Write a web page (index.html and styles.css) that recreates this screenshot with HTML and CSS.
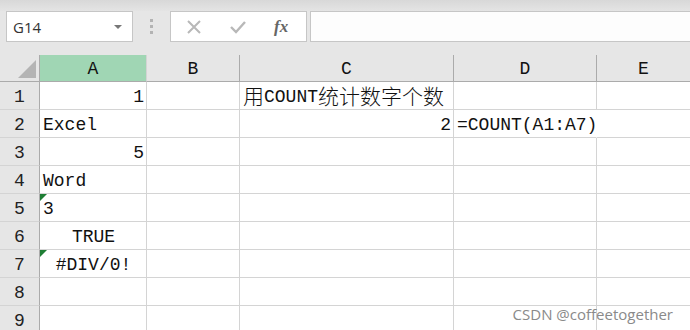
FILE: index.html
```html
<!DOCTYPE html>
<html lang="zh">
<head>
    <meta charset="UTF-8">
    <title>COUNT</title>
    <link rel="stylesheet" href="styles.css">
</head>
<body>
    <div class="top-strip"></div>

    <div class="formula-bar">
        <div class="name-box">
            <span class="name-text">G14</span>
            <span class="name-arrow"></span>
        </div>
        <div class="grip">
            <span></span><span></span><span></span>
        </div>
        <div class="fx-box">
            <svg class="fx-icon" width="16" height="16" viewBox="0 0 16 16">
                <path d="M2 2 L14 14 M14 2 L2 14" stroke="#b8b8b8" stroke-width="2" fill="none"/>
            </svg>
            <svg class="fx-icon" width="18" height="16" viewBox="0 0 18 16">
                <path d="M2 8 L7 13 L16 3" stroke="#b8b8b8" stroke-width="2.4" fill="none"/>
            </svg>
            <span class="fx-label">fx</span>
        </div>
        <div class="formula-input"></div>
    </div>

    <div class="sheet">
        <div class="corner"><span class="corner-tri"></span></div>
        <div class="col-head selected">A</div>
        <div class="col-head">B</div>
        <div class="col-head">C</div>
        <div class="col-head">D</div>
        <div class="col-head">E</div>

        <div class="row-head">1</div>
        <div class="cell right">1</div>
        <div class="cell"></div>
        <div class="cell"><span class="han">用</span>COUNT<span class="han">统计数字个数</span></div>
        <div class="cell"></div>
        <div class="cell"></div>

        <div class="row-head">2</div>
        <div class="cell">Excel</div>
        <div class="cell"></div>
        <div class="cell right">2</div>
        <div class="cell spill">=COUNT(A1:A7)</div>
        <div class="cell"></div>

        <div class="row-head">3</div>
        <div class="cell right">5</div>
        <div class="cell"></div>
        <div class="cell"></div>
        <div class="cell"></div>
        <div class="cell"></div>

        <div class="row-head">4</div>
        <div class="cell">Word</div>
        <div class="cell"></div>
        <div class="cell"></div>
        <div class="cell"></div>
        <div class="cell"></div>

        <div class="row-head">5</div>
        <div class="cell flag">3</div>
        <div class="cell"></div>
        <div class="cell"></div>
        <div class="cell"></div>
        <div class="cell"></div>

        <div class="row-head">6</div>
        <div class="cell center">TRUE</div>
        <div class="cell"></div>
        <div class="cell"></div>
        <div class="cell"></div>
        <div class="cell"></div>

        <div class="row-head">7</div>
        <div class="cell center flag">#DIV/0!</div>
        <div class="cell"></div>
        <div class="cell"></div>
        <div class="cell"></div>
        <div class="cell"></div>

        <div class="row-head">8</div>
        <div class="cell"></div>
        <div class="cell"></div>
        <div class="cell"></div>
        <div class="cell"></div>
        <div class="cell"></div>

        <div class="row-head">9</div>
        <div class="cell"></div>
        <div class="cell"></div>
        <div class="cell"></div>
        <div class="cell"></div>
        <div class="cell"></div>

        <div class="watermark">CSDN @coffeetogether</div>
    </div>
</body>
</html>
```

FILE: styles.css
```css
:root {
    --toolbar-bg: #e6e6e6;
    --grid-line: #d4d4d4;
    --head-line: #ababab;
    --selected: #a0d6b4;
    --cell-font: 'Liberation Mono', 'DejaVu Sans Mono', monospace;
}

body {
    margin: 0;
    padding: 0;
    width: 690px;
    height: 330px;
    overflow: hidden;
    background-color: var(--toolbar-bg);
    color: #111;
}

.top-strip {
    height: 11px;
    background: linear-gradient(#d8d8d8, #e4e4e4);
}

.formula-bar {
    height: 31px;
    display: flex;
    align-items: stretch;
    padding-left: 6px;
}

.name-box {
    width: 127px;
    box-sizing: border-box;
    background-color: #fff;
    border: 1px solid #c6c6c6;
    display: flex;
    align-items: center;
    justify-content: space-between;
    padding: 0 10px 0 6px;
}

.name-text {
    font-family: 'Open Sans', 'Noto Sans', sans-serif;
    font-size: 15px;
    color: #333;
}

.name-arrow {
    width: 0;
    height: 0;
    border-left: 4px solid transparent;
    border-right: 4px solid transparent;
    border-top: 4px solid #777;
}

.grip {
    width: 37px;
    display: flex;
    flex-direction: column;
    align-items: center;
    justify-content: center;
    gap: 3px;
}

.grip span {
    width: 3px;
    height: 3px;
    background-color: #b3b3b3;
}

.fx-box {
    width: 137px;
    box-sizing: border-box;
    background-color: #fff;
    border: 1px solid #c6c6c6;
    display: flex;
    align-items: center;
    padding-left: 15px;
    gap: 27px;
}

.fx-label {
    font-family: 'Liberation Serif', serif;
    font-style: italic;
    font-weight: bold;
    font-size: 17px;
    color: #666;
}

.formula-input {
    flex: 1;
    margin-left: 3px;
    margin-right: -2px;
    background-color: #fdfdfd;
    border: 1px solid #c6c6c6;
}

.sheet {
    position: relative;
    margin-top: 13px;
    display: grid;
    grid-template-columns: 40px 107px 93px 214px 143px 94px;
    grid-template-rows: 27px repeat(9, 28px);
    font-family: var(--cell-font);
    font-size: 18px;
}

.corner {
    position: relative;
    border-right: 1px solid var(--head-line);
    border-bottom: 1px solid var(--head-line);
}

.corner-tri {
    position: absolute;
    right: 3px;
    bottom: 3px;
    width: 0;
    height: 0;
    border-left: 18px solid transparent;
    border-bottom: 18px solid #b4b4b4;
}

.col-head {
    display: flex;
    align-items: center;
    justify-content: center;
    border-right: 1px solid var(--head-line);
    border-bottom: 1px solid var(--head-line);
    padding-top: 1px;
}

.col-head.selected {
    background-color: var(--selected);
    border-right-color: var(--grid-line);
}

.row-head {
    display: flex;
    align-items: flex-end;
    justify-content: center;
    padding-bottom: 2px;
    border-right: 1px solid var(--head-line);
    border-bottom: 1px solid var(--grid-line);
    color: #222;
}

.cell {
    position: relative;
    background-color: #fff;
    border-right: 1px solid var(--grid-line);
    border-bottom: 1px solid var(--grid-line);
    display: flex;
    align-items: flex-end;
    padding: 0 2px 2px 3px;
    white-space: nowrap;
    overflow: visible;
}

.right {
    justify-content: flex-end;
}

.center {
    justify-content: center;
}

.spill {
    border-right-color: #fff;
    z-index: 1;
}

.han {
    font-family: 'Noto Sans CJK SC', sans-serif;
    font-size: 21px;
    font-weight: 300;
    line-height: 1;
    margin-bottom: 1px;
}

.flag::before {
    content: '';
    position: absolute;
    left: 0;
    top: 0;
    border-top: 7px solid #1e7e34;
    border-right: 7px solid transparent;
}

.watermark {
    position: absolute;
    right: 17px;
    bottom: 10px;
    font-family: 'Open Sans', 'Noto Sans', sans-serif;
    font-size: 15px;
    color: #8a8a8a;
    z-index: 2;
}
```
